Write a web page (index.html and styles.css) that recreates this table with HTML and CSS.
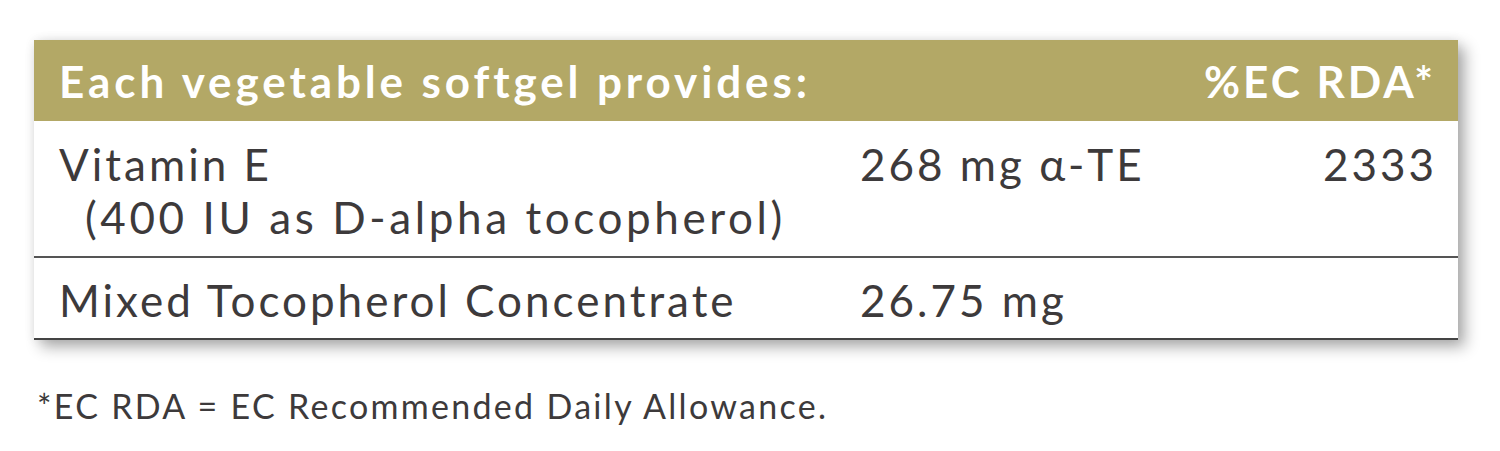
FILE: index.html
```html
<!DOCTYPE html>
<html>
<head>
<meta charset="utf-8">
<link rel="stylesheet" href="styles.css">
</head>
<body>
<div class="page">
  <div class="panel">
    <div class="head">
      <div class="head-title">Each vegetable softgel provides:</div>
      <div class="head-rda">%EC RDA*</div>
    </div>
    <div class="row row-first">
      <div class="name">
        <div>Vitamin E</div>
        <div class="sub">(400 IU as D-alpha tocopherol)</div>
      </div>
      <div class="amount">268 mg α-TE</div>
      <div class="rda">2333</div>
    </div>
    <div class="row row-last">
      <div class="name">Mixed Tocopherol Concentrate</div>
      <div class="amount">26.75 mg</div>
      <div class="rda"></div>
    </div>
  </div>
  <p class="note">*EC RDA = EC Recommended Daily Allowance.</p>
</div>
</body>
</html>
```
FILE: styles.css
```css
html, body {
  margin: 0;
  padding: 0;
  background: #ffffff;
}
.page {
  padding: 40px 42px 0 34px;
}
.panel {
  width: 1424px;
  background: #fff;
  box-shadow: 7px 7px 14px rgba(0,0,0,0.32), 0 0 10px rgba(0,0,0,0.08);
  font-family: Lato, "Liberation Sans", sans-serif;
  color: #3d3a3b;
}
.head {
  height: 81px;
  background: #b3a866;
  color: #fff;
  display: flex;
  align-items: center;
  justify-content: space-between;
  padding: 0 22px 0 25px;
  font-weight: 700;
  font-size: 44px;
  letter-spacing: 3.9px;
}
.head-rda {
  letter-spacing: 3px;
}
.row {
  display: grid;
  grid-template-columns: 801px 1fr 200px;
  padding: 0 21px 0 25px;
  font-size: 44px;
  line-height: 53px;
  font-weight: 400;
  letter-spacing: 3px;
}
.row-first {
  padding-top: 17px;
  padding-bottom: 12px;
  border-bottom: 2px solid #555;
}
.row-last {
  padding-top: 16px;
  padding-bottom: 11px;
  border-bottom: 2px solid #444;
}
.sub {
  padding-left: 26px;
  letter-spacing: 3.6px;
}
.rda {
  text-align: right;
}
.note {
  margin: 44px 0 0 3px;
  font-family: Lato, "Liberation Sans", sans-serif;
  font-size: 34px;
  line-height: 44px;
  letter-spacing: 2.3px;
  color: #3d3a3b;
}
```
